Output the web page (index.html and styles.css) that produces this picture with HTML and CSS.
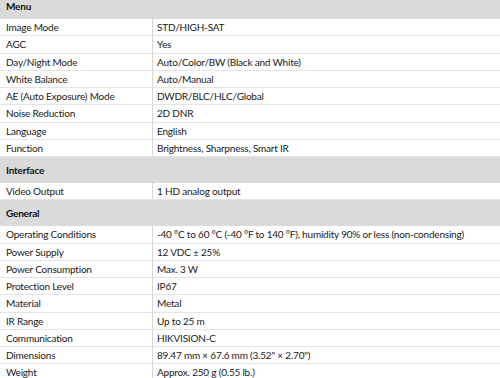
FILE: index.html
```html
<!DOCTYPE html>
<html lang="en">
<head>
<meta charset="utf-8">
<title>Specifications</title>
<link rel="stylesheet" href="styles.css">
</head>
<body>
<div class="spec">
  <div class="head first">Menu</div>
  <div class="row"><div class="k">Image Mode</div><div class="v">STD/HIGH-SAT</div></div>
  <div class="row"><div class="k">AGC</div><div class="v">Yes</div></div>
  <div class="row"><div class="k">Day/Night Mode</div><div class="v">Auto/Color/BW (Black and White)</div></div>
  <div class="row"><div class="k">White Balance</div><div class="v">Auto/Manual</div></div>
  <div class="row"><div class="k">AE (Auto Exposure) Mode</div><div class="v">DWDR/BLC/HLC/Global</div></div>
  <div class="row"><div class="k">Noise Reduction</div><div class="v">2D DNR</div></div>
  <div class="row"><div class="k">Language</div><div class="v">English</div></div>
  <div class="row"><div class="k">Function</div><div class="v">Brightness, Sharpness, Smart IR</div></div>
  <div class="head">Interface</div>
  <div class="row"><div class="k">Video Output</div><div class="v">1 HD analog output</div></div>
  <div class="head">General</div>
  <div class="row"><div class="k">Operating Conditions</div><div class="v">-40 °C to 60 °C (-40 °F to 140 °F), humidity 90% or less (non-condensing)</div></div>
  <div class="row"><div class="k">Power Supply</div><div class="v">12 VDC ± 25%</div></div>
  <div class="row"><div class="k">Power Consumption</div><div class="v">Max. 3 W</div></div>
  <div class="row"><div class="k">Protection Level</div><div class="v">IP67</div></div>
  <div class="row"><div class="k">Material</div><div class="v">Metal</div></div>
  <div class="row"><div class="k">IR Range</div><div class="v">Up to 25 m</div></div>
  <div class="row"><div class="k">Communication</div><div class="v">HIKVISION-C</div></div>
  <div class="row"><div class="k">Dimensions</div><div class="v">89.47 mm × 67.6 mm (3.52" × 2.70")</div></div>
  <div class="row"><div class="k">Weight</div><div class="v">Approx. 250 g (0.55 lb.)</div></div>
</div>
</body>
</html>
```

FILE: styles.css
```css
html, body {
  margin: 0;
  padding: 0;
  background: #ffffff;
}
body {
  font-family: Lato, "Open Sans", sans-serif;
  font-size: 10px;
  letter-spacing: -0.2px;
  color: #1a1a1a;
  overflow: hidden;
}
.spec {
  display: flex;
  flex-direction: column;
}
.head {
  height: 26px;
  box-sizing: border-box;
  display: flex;
  align-items: center;
  padding-left: 6px;
  background: #dadada;
  font-weight: bold;
  color: #111;
}
.head.first {
  margin-top: -7px;
}
.row {
  height: 17.25px;
  box-sizing: border-box;
  display: grid;
  grid-template-columns: 153px 1fr;
  border-bottom: 1px solid #e4e4e4;
}
.k, .v {
  display: flex;
  align-items: center;
  white-space: nowrap;
}
.k {
  padding-left: 6px;
  border-right: 1px solid #d6d6d6;
}
.v {
  padding-left: 4px;
}
```
